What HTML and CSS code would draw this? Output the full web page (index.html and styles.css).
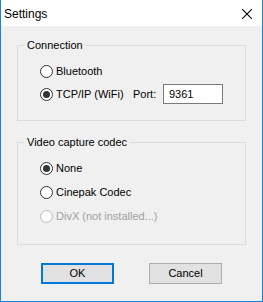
FILE: index.html
```html
<!DOCTYPE html>
<html>
<head>
<meta charset="utf-8">
<link rel="stylesheet" href="styles.css">
</head>
<body>
<div class="window">
  <div class="titlebar">
    <span class="title">Settings</span>
    <svg class="close" width="10" height="10" viewBox="0 0 10 10"><path d="M0 0 L10 10 M10 0 L0 10" stroke="#000" stroke-width="1.1" fill="none"/></svg>
  </div>
  <div class="client">
    <fieldset class="group g1">
      <legend>Connection</legend>
      <div class="row"><span class="radio"></span><span class="lbl">Bluetooth</span></div>
      <div class="row"><span class="radio checked"></span><span class="lbl tcp">TCP/IP (WiFi)</span><span class="port">Port:</span><span class="input">9361</span></div>
    </fieldset>
    <fieldset class="group g2">
      <legend>Video capture codec</legend>
      <div class="row"><span class="radio checked"></span><span class="lbl">None</span></div>
      <div class="row"><span class="radio"></span><span class="lbl">Cinepak Codec</span></div>
      <div class="row disabled"><span class="radio"></span><span class="lbl">DivX (not installed...)</span></div>
    </fieldset>
    <div class="buttons">
      <button class="btn default">OK</button>
      <button class="btn cancel">Cancel</button>
    </div>
  </div>
</div>
</body>
</html>
```

FILE: styles.css
```css
html, body {
  margin: 0;
  padding: 0;
}
body {
  width: 263px;
  height: 302px;
  overflow: hidden;
  font-family: "Liberation Sans", Arial, sans-serif;
  font-size: 11px;
  color: #000;
}
.window {
  box-sizing: border-box;
  width: 263px;
  height: 302px;
  border: 1px solid #1883d7;
  border-top: none;
  display: flex;
  flex-direction: column;
  background: #f0f0f0;
}
.titlebar {
  height: 26px;
  background: #fff;
  display: flex;
  align-items: flex-start;
  justify-content: space-between;
  padding: 0 10px 0 3px;
  flex: none;
}
.title {
  font-size: 12px;
  line-height: 14px;
  margin-top: 7px;
}
.close {
  display: block;
  margin-top: 9px;
}
.client {
  flex: 1;
  display: flex;
  flex-direction: column;
}
.group {
  margin: 0 16px;
  padding: 0;
  border: 1px solid #dcdcdc;
  min-width: 0;
  display: flex;
  flex-direction: column;
}
.group legend {
  margin-left: 6px;
  padding: 0 3px;
  line-height: 14px;
  height: 14px;
}
.g1 {
  margin-top: 12px;
  padding: 9px 0 16px;
  gap: 3px;
}
.g2 {
  margin-top: 14px;
  padding: 9px 0 18px;
  gap: 4px;
}
.row {
  height: 20px;
  display: flex;
  align-items: center;
  padding-left: 22px;
}
.radio {
  box-sizing: border-box;
  width: 13px;
  height: 13px;
  border: 1px solid #333;
  border-radius: 50%;
  background: #fff;
  flex: none;
  display: flex;
  align-items: center;
  justify-content: center;
}
.radio.checked::after {
  content: "";
  width: 7px;
  height: 7px;
  border-radius: 50%;
  background: #333;
}
.lbl {
  margin-left: 3px;
  line-height: 14px;
}
.tcp {
  width: 77px;
  flex: none;
}
.port {
  width: 30px;
  flex: none;
}
.input {
  box-sizing: border-box;
  width: 60px;
  height: 20px;
  border: 1px solid #7a7a7a;
  background: #fff;
  padding-left: 5px;
  line-height: 18px;
}
.disabled .radio {
  border-color: #bcbcbc;
  background: #fcfcfc;
}
.disabled .lbl {
  color: #a0a0a0;
}
.buttons {
  display: flex;
  margin-top: 18px;
  padding-left: 40px;
  gap: 35px;
}
.btn {
  box-sizing: border-box;
  width: 73px;
  height: 21px;
  margin: 0;
  padding: 0;
  background: #e1e1e1;
  border: 1px solid #adadad;
  font-family: "Liberation Sans", Arial, sans-serif;
  font-size: 11px;
  color: #000;
  line-height: 17px;
}
.btn.default {
  border: 2px solid #0078d7;
}
```
